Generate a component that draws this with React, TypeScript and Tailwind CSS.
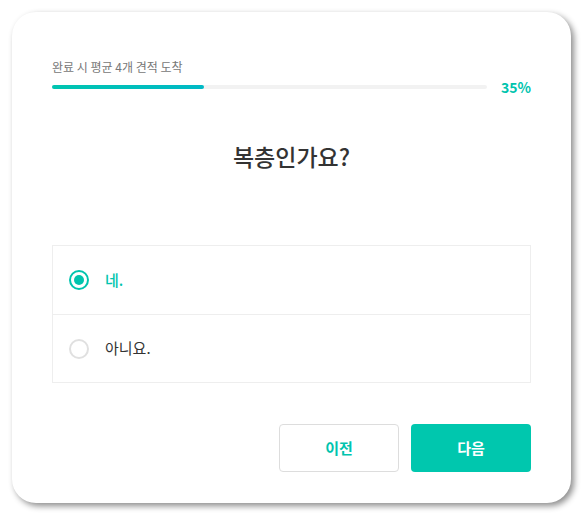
import React, { useState } from "react";

const options = ["네.", "아니요."];

const App: React.FC = () => {
  const [selected, setSelected] = useState<number>(0);
  const progress = 35;

  return (
    <div
      className="min-h-[520px] w-[585px] bg-white p-3"
      style={{ fontFamily: '"Noto Sans CJK KR", "Noto Sans", sans-serif' }}
    >
      <div className="flex h-[491px] w-[559px] flex-col rounded-[24px] bg-white px-10 pt-[47px] shadow-[3px_3px_6px_rgba(0,0,0,0.45)]">
        <p className="text-[12px] leading-[16px] text-[#777]">
          완료 시 평균 4개 견적 도착
        </p>
        <div className="mt-[2px] flex h-5 items-center">
          <div className="h-1 flex-1 rounded-full bg-[#f2f2f2]">
            <div
              className="h-1 rounded-full bg-gradient-to-r from-[#00c5b0] to-[#00b9c6]"
              style={{ width: `${progress}%` }}
            />
          </div>
          <span className="ml-[14px] text-[14px] font-bold leading-5 text-[#00c4ae]">
            {progress}%
          </span>
        </div>

        <h2 className="mt-[44px] text-center text-[23px] font-medium leading-[30px] text-[#333]">
          복층인가요?
        </h2>

        <div className="mt-[74px] border border-[#eee]">
          {options.map((label, i) => {
            const active = selected === i;
            return (
              <button
                key={label}
                type="button"
                onClick={() => setSelected(i)}
                className={`flex h-[68px] w-full items-center px-4 text-left ${
                  i > 0 ? "border-t border-[#eee]" : ""
                }`}
              >
                <span
                  className={`flex h-5 w-5 items-center justify-center rounded-full border-2 ${
                    active ? "border-[#00c4ae]" : "border-[#e0e0e0]"
                  }`}
                >
                  {active && (
                    <span className="h-[10px] w-[10px] rounded-full bg-[#00c4ae]" />
                  )}
                </span>
                <span
                  className={`ml-4 text-[15px] ${
                    active ? "font-medium text-[#00c4ae]" : "text-[#333]"
                  }`}
                >
                  {label}
                </span>
              </button>
            );
          })}
        </div>

        <div className="mt-[41px] flex justify-end gap-3">
          <button
            type="button"
            className="h-12 w-[120px] rounded border border-[#ddd] bg-white text-[15px] font-bold text-[#00c4ae]"
          >
            이전
          </button>
          <button
            type="button"
            className="h-12 w-[120px] rounded bg-[#00c7ae] text-[15px] font-bold text-white"
          >
            다음
          </button>
        </div>
      </div>
    </div>
  );
};

export default App;
